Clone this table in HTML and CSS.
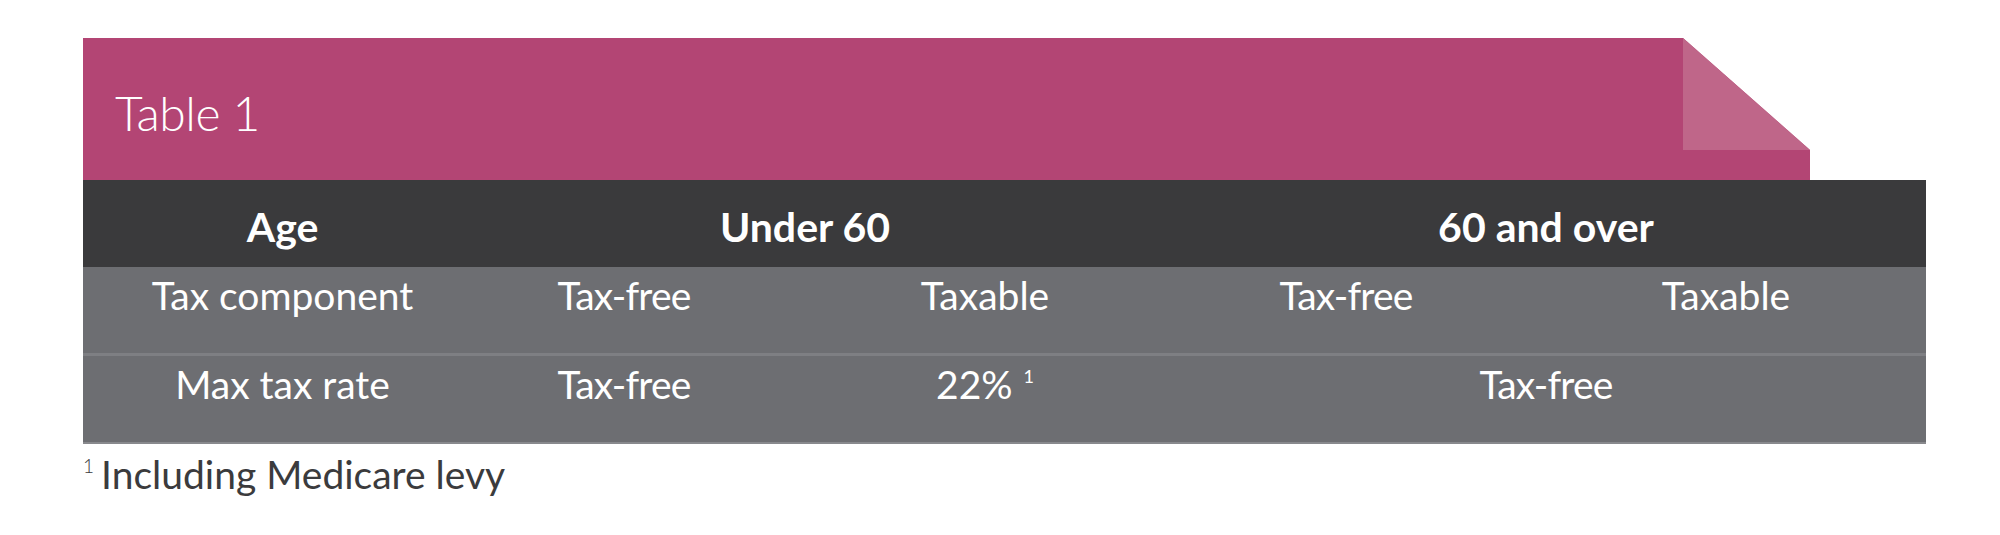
FILE: index.html
```html
<!DOCTYPE html>
<html lang="en">
<head>
<meta charset="utf-8">
<title>Table 1</title>
<link rel="stylesheet" href="styles.css">
</head>
<body>
<div class="page">
  <div class="title-bar">
    <h1 class="title">Table 1</h1>
    <svg class="fold" width="127" height="112" viewBox="0 0 127 112" aria-hidden="true">
      <polygon points="0,0 127,0 127,112" fill="#ffffff"/>
      <polygon points="0,0 0,112 127,112" fill="#bf6689"/>
    </svg>
  </div>
  <div class="table">
    <div class="row head">
      <div class="cell first">Age</div>
      <div class="cell span2">Under 60</div>
      <div class="cell span2">60 and over</div>
    </div>
    <div class="row body sep">
      <div class="cell first">Tax component</div>
      <div class="cell narrow">Tax-free</div>
      <div class="cell">Taxable</div>
      <div class="cell narrow">Tax-free</div>
      <div class="cell">Taxable</div>
    </div>
    <div class="row body last">
      <div class="cell first">Max tax rate</div>
      <div class="cell narrow">Tax-free</div>
      <div class="cell">22%<span class="sup">1</span></div>
      <div class="cell span2 narrow">Tax-free</div>
    </div>
  </div>
  <p class="note"><span class="note-sup">1</span>Including Medicare levy</p>
</div>
</body>
</html>
```

FILE: styles.css
```css
html, body {
  margin: 0;
  padding: 0;
  background: #ffffff;
}

.page {
  padding: 38px 0 0 83px;
  font-family: Lato, "Liberation Sans", sans-serif;
}

.title-bar {
  position: relative;
  box-sizing: border-box;
  width: 1727px;
  height: 142px;
  padding: 45px 0 0 32px;
  background: #b34574;
}

.title {
  margin: 0;
  font-size: 48px;
  line-height: 60px;
  font-weight: 300;
  letter-spacing: -0.5px;
  color: #ffffff;
}

.fold {
  position: absolute;
  top: 0;
  right: 0;
  display: block;
}

.table {
  width: 1843px;
}

.row {
  display: grid;
  grid-template-columns: 361px 360px 362px 360px 400px;
  color: #ffffff;
}

.head {
  height: 87px;
  background: #3a3a3c;
  font-weight: 700;
  font-size: 41px;
  line-height: 48px;
}

.head .cell {
  padding-top: 23px;
}

.body {
  height: 86px;
  background: #6d6e72;
  font-size: 39px;
  line-height: 47px;
}

.body .cell {
  padding-top: 5px;
}

.body .cell.narrow {
  letter-spacing: -0.8px;
}

.sep {
  border-bottom: 3px solid #7e7f83;
}

.last {
  border-bottom: 2px solid #88898d;
}

.cell {
  text-align: center;
  white-space: nowrap;
}

.cell.first {
  padding-left: 38px;
}

.span2 {
  grid-column: span 2;
}

.sup {
  font-size: 18px;
  vertical-align: 16px;
  line-height: 0;
  margin-left: 11px;
}

.note {
  margin: 7px 0 0 0;
  font-size: 39px;
  line-height: 46px;
  color: #3b3b3d;
}

.note-sup {
  font-size: 19px;
  font-weight: 300;
  line-height: 0;
  vertical-align: 16px;
  margin-right: 7px;
}
```
